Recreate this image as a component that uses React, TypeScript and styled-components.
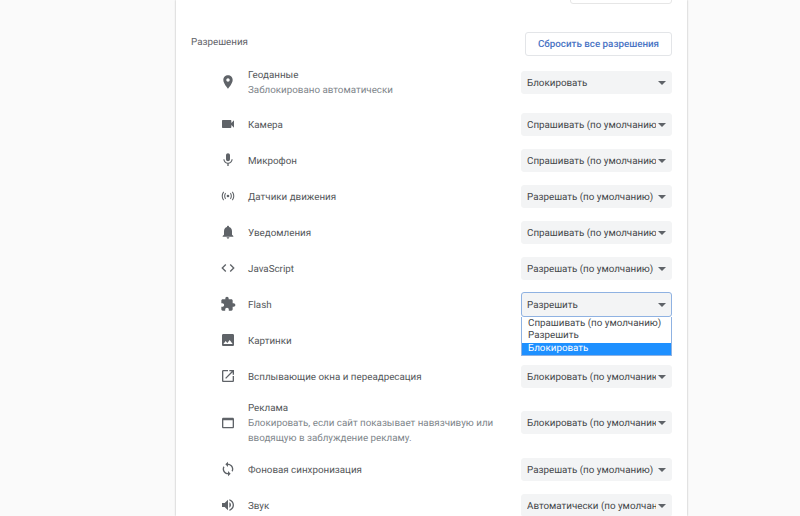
import React from "react";
import styled, { createGlobalStyle } from "styled-components";

const Global = createGlobalStyle`
  html, body { margin: 0; padding: 0; height: 516px; overflow: hidden; background: #fafafa; }
  body {
    font-family: Roboto, "Noto Sans", sans-serif;
    font-size: 9.8px;
    color: #4a4a4a;
    text-rendering: geometricPrecision;
  }
`;

const Card = styled.main`
  width: 511px;
  height: 516px;
  margin-left: 176px;
  box-sizing: border-box;
  background: #fff;
  box-shadow: 0 0 2px rgba(0, 0, 0, 0.3);
  overflow: hidden;
  padding: 0 15px;
`;

const TopRow = styled.div`
  display: flex;
  justify-content: flex-end;
  height: 32px;
`;

const CutButton = styled.div`
  width: 102px;
  height: 24px;
  margin-top: -20px;
  box-sizing: border-box;
  border: 1px solid #e6e6e6;
  border-radius: 3px;
  background: #fff;
`;

const Header = styled.div`
  display: flex;
  justify-content: space-between;
  align-items: center;
  height: 24px;
  margin-bottom: 2px;
`;

const HeaderTitle = styled.h2`
  margin: 0 0 3px;
  font-size: 9.8px;
  font-weight: 400;
  color: #5f6368;
`;

const ResetButton = styled.button`
  width: 147px;
  height: 24px;
  padding: 0;
  border: 1px solid #e3e5e8;
  border-radius: 3px;
  background: #fff;
  color: #4a74c4;
  font: 500 9.8px Roboto, sans-serif;
  text-rendering: geometricPrecision;
`;

const RowList = styled.div`
  display: flex;
  flex-direction: column;
`;

const Row = styled.div<{ $h: number }>`
  display: flex;
  align-items: center;
  height: ${(p) => p.$h}px;
  padding-left: 29px;
  flex: none;
`;

const IconSlot = styled.div`
  width: 16px;
  height: 16px;
  flex: none;
  margin-right: 12px;
  svg { display: block; width: 16px; height: 16px; fill: #5f6368; }
`;

const Labels = styled.div`
  flex: 1;
  min-width: 0;
  padding: 2px 24px 0 0;
`;

const Name = styled.div`
  line-height: 15px;
  color: #54575a;
`;

const Sub = styled.div`
  line-height: 15px;
  color: #80868b;
`;

const SelectWrap = styled.div`
  position: relative;
  flex: none;
  width: 151px;
  height: 25px;
`;

const SelectBox = styled.div<{ $focus?: boolean }>`
  position: relative;
  box-sizing: border-box;
  width: 151px;
  height: ${(p) => (p.$focus ? 25 : 23)}px;
  margin-top: ${(p) => (p.$focus ? 0 : 1)}px;
  line-height: ${(p) => (p.$focus ? 25 : 23)}px;
  padding: 0 15px 0 5px;
  background: #f3f4f5;
  border-radius: 3px;
  border: 1px solid ${(p) => (p.$focus ? "#8fb2e2" : "#f3f4f5")};
  color: #44474a;
`;

const SelectText = styled.div`
  height: 100%;
  white-space: nowrap;
  overflow: hidden;
`;

const Arrow = styled.svg<{ $focus?: boolean }>`
  position: absolute;
  right: 5px;
  top: ${(p) => (p.$focus ? 10 : 9)}px;
  width: 8px;
  height: 4px;
  fill: #5f6368;
`;

const Popup = styled.ul`
  position: absolute;
  z-index: 2;
  top: 25px;
  left: 0;
  width: 151px;
  box-sizing: border-box;
  margin: 0;
  padding: 1.5px 0 0;
  list-style: none;
  background: #fff;
  border: 1px solid #8fb2e2;
  border-top: 0;
`;

const PopupItem = styled.li<{ $active?: boolean }>`
  height: 12.4px;
  line-height: 12.4px;
  padding-left: 6px;
  white-space: nowrap;
  color: ${(p) => (p.$active ? "#fff" : "#44474a")};
  background: ${(p) => (p.$active ? "#1e90ff" : "transparent")};
`;

const I: Record<string, React.ReactNode> = {
  pin: <path d="M12 2C8.13 2 5 5.13 5 9c0 5.25 7 13 7 13s7-7.75 7-13c0-3.87-3.13-7-7-7zm0 9.5c-1.38 0-2.5-1.12-2.5-2.5s1.12-2.5 2.5-2.5 2.5 1.12 2.5 2.5-1.12 2.5-2.5 2.5z" />,
  cam: <path d="M17 10.5V7c0-.55-.45-1-1-1H4c-.55 0-1 .45-1 1v10c0 .55.45 1 1 1h12c.55 0 1-.45 1-1v-3.5l4 4v-11l-4 4z" />,
  mic: <path d="M12 14c1.66 0 2.99-1.34 2.99-3L15 5c0-1.66-1.34-3-3-3S9 3.34 9 5v6c0 1.66 1.34 3 3 3zm5.3-3c0 3-2.54 5.1-5.3 5.1S6.7 14 6.7 11H5c0 3.41 2.72 6.23 6 6.72V21h2v-3.28c3.28-.48 6-3.3 6-6.72h-1.7z" />,
  sensor: <path d="M12 10a2 2 0 1 0 0 4 2 2 0 0 0 0-4zM9 8.300 7.900 7.200C6.800 8.500 6.200 10.200 6.200 12s.6 3.500 1.700 4.800L9 15.700c-.8-1-1.200-2.300-1.200-3.700S8.200 9.300 9 8.300zm6 0c.8 1 1.200 2.300 1.200 3.700s-.4 2.700-1.200 3.700l1.100 1.100c1.100-1.300 1.700-3 1.700-4.800s-.6-3.500-1.700-4.800L15 8.300zM6.200 6.300 5.100 5.200C3.500 7.100 2.600 9.400 2.600 12s.9 4.900 2.500 6.800l1.100-1.100C4.900 16.100 4.200 14.200 4.200 12s.7-4.100 2-5.700zm11.600 0c1.300 1.600 2 3.500 2 5.700s-.7 4.100-2 5.700l1.100 1.100c1.600-1.900 2.500-4.200 2.500-6.800s-.9-4.900-2.500-6.800l-1.100 1.100z" />,
  bell: <path d="M12 22c1.100 0 2-.9 2-2h-4c0 1.100.89 2 2 2zm6-6v-5c0-3.070-1.640-5.640-4.500-6.320V4c0-.83-.67-1.500-1.500-1.500s-1.500.67-1.500 1.500v.68C7.630 5.360 6 7.920 6 11v5l-2 2v1h16v-1l-2-2z" />,
  code: <path d="M9.400 16.600L4.800 12l4.600-4.600L8 6l-6 6 6 6 1.400-1.400zm5.200 0l4.600-4.600-4.600-4.600L16 6l6 6-6 6-1.400-1.400z" />,
  ext: <path d="M20.500 11H19V7c0-1.100-.9-2-2-2h-4V3.500C13 2.120 11.880 1 10.500 1S8 2.120 8 3.500V5H4c-1.100 0-1.990.9-1.990 2v3.800H3.500c1.490 0 2.700 1.210 2.700 2.700s-1.210 2.700-2.700 2.700H2V20c0 1.100.9 2 2 2h3.800v-1.500c0-1.490 1.210-2.700 2.700-2.700 1.490 0 2.700 1.210 2.700 2.700V22H17c1.100 0 2-.9 2-2v-4h1.500c1.380 0 2.500-1.120 2.500-2.500S21.880 11 20.500 11z" />,
  photo: <path d="M21 19V5c0-1.100-.9-2-2-2H5c-1.100 0-2 .9-2 2v14c0 1.100.9 2 2 2h14c1.100 0 2-.9 2-2zM8.500 13.500l2.500 3.010L14.500 12l4.500 6H5l3.500-4.500z" />,
  open: <path d="M19 19H5V5h7V3H5c-1.110 0-2 .9-2 2v14c0 1.100.89 2 2 2h14c1.100 0 2-.9 2-2v-7h-2v7zM14 3v2h3.590l-9.830 9.830 1.410 1.410L19 6.410V10h2V3h-7z" />,
  web: <path d="M19 4H5c-1.110 0-2 .9-2 2v12c0 1.100.89 2 2 2h14c1.100 0 2-.9 2-2V6c0-1.100-.89-2-2-2zm0 14H5V8h14v10z" />,
  sync: <path d="M12 4V1L8 5l4 4V6c3.310 0 6 2.690 6 6 0 1.010-.25 1.970-.7 2.800l1.460 1.460C19.540 15.030 20 13.570 20 12c0-4.420-3.580-8-8-8zm0 14c-3.310 0-6-2.690-6-6 0-1.010.25-1.970.7-2.800L5.240 7.740C4.460 8.970 4 10.430 4 12c0 4.420 3.580 8 8 8v3l4-4-4-4v3z" />,
  vol: <path d="M3 9v6h4l5 5V4L7 9H3zm13.500 3c0-1.770-1.020-3.290-2.500-4.030v8.050c1.480-.73 2.500-2.250 2.500-4.020zM14 3.230v2.060c2.890.86 5 3.540 5 6.710s-2.110 5.850-5 6.710v2.060c4.010-.91 7-4.490 7-8.770s-2.990-7.860-7-8.770z" />,
};

const ASK = "Спрашивать (по умолчанию)";
const ALLOW = "Разрешать (по умолчанию)";
const BLOCK = "Блокировать (по умолчанию)";

const rows: { h: number; icon: string; name: string; sub?: string; value: string; open?: boolean }[] = [
  { h: 48, icon: "pin", name: "Геоданные", sub: "Заблокировано автоматически", value: "Блокировать" },
  { h: 36, icon: "cam", name: "Камера", value: ASK },
  { h: 36, icon: "mic", name: "Микрофон", value: ASK },
  { h: 36, icon: "sensor", name: "Датчики движения", value: ALLOW },
  { h: 36, icon: "bell", name: "Уведомления", value: ASK },
  { h: 36, icon: "code", name: "JavaScript", value: ALLOW },
  { h: 36, icon: "ext", name: "Flash", value: "Разрешить", open: true },
  { h: 36, icon: "photo", name: "Картинки", value: ALLOW },
  { h: 36, icon: "open", name: "Всплывающие окна и переадресация", value: BLOCK },
  { h: 57, icon: "web", name: "Реклама", sub: "Блокировать, если сайт показывает навязчивую или вводящую в заблуждение рекламу.", value: BLOCK },
  { h: 36, icon: "sync", name: "Фоновая синхронизация", value: ALLOW },
  { h: 36, icon: "vol", name: "Звук", value: "Автоматически (по умолчанию)" },
];

export default function App() {
  return (
    <>
      <Global />
      <Card>
        <TopRow>
          <CutButton />
        </TopRow>
        <Header>
          <HeaderTitle>Разрешения</HeaderTitle>
          <ResetButton>Сбросить все разрешения</ResetButton>
        </Header>
        <RowList>
          {rows.map((r) => (
            <Row key={r.name} $h={r.h}>
              <IconSlot>
                <svg viewBox="0 0 24 24">{I[r.icon]}</svg>
              </IconSlot>
              <Labels>
                <Name>{r.name}</Name>
                {r.sub && <Sub>{r.sub}</Sub>}
              </Labels>
              <SelectWrap>
                <SelectBox $focus={r.open}>
                  <SelectText>{r.value}</SelectText>
                  <Arrow $focus={r.open} viewBox="0 0 8 4">
                    <path d="M0 0h8L4 4z" />
                  </Arrow>
                </SelectBox>
                {r.open && (
                  <Popup>
                    <PopupItem>Спрашивать (по умолчанию)</PopupItem>
                    <PopupItem>Разрешить</PopupItem>
                    <PopupItem $active>Блокировать</PopupItem>
                  </Popup>
                )}
              </SelectWrap>
            </Row>
          ))}
        </RowList>
      </Card>
    </>
  );
}
